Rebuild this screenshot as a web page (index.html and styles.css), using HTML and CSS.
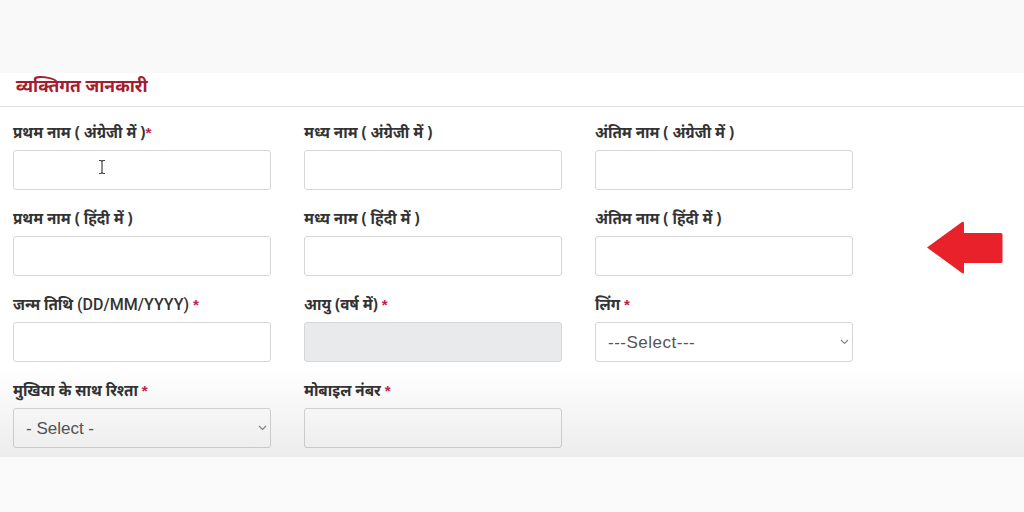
FILE: index.html
```html
<!DOCTYPE html>
<html lang="hi">
<head>
<meta charset="utf-8">
<title>व्यक्तिगत जानकारी</title>
<link rel="stylesheet" href="styles.css">
</head>
<body>
<div class="top"></div>
<section class="panel">
  <h2 class="panel-title">व्यक्तिगत जानकारी</h2>
  <div class="form">
    <div class="field">
      <label class="label">प्रथम नाम ( अंग्रेजी में )<span class="req">*</span></label>
      <div class="control">
        <input class="input" type="text">
        <svg class="ibeam" width="8" height="16" viewBox="0 0 8 16"><path d="M1 1.5h2l1 1 1-1h2M4 2.5v11M1 14.5h2l1-1 1 1h2" fill="none" stroke="#444" stroke-width="1.2"/></svg>
      </div>
    </div>
    <div class="field">
      <label class="label">मध्य नाम ( अंग्रेजी में )</label>
      <div class="control"><input class="input" type="text"></div>
    </div>
    <div class="field">
      <label class="label">अंतिम नाम ( अंग्रेजी में )</label>
      <div class="control"><input class="input" type="text"></div>
    </div>

    <div class="field">
      <label class="label">प्रथम नाम ( हिंदी में )</label>
      <div class="control"><input class="input" type="text"></div>
    </div>
    <div class="field">
      <label class="label">मध्य नाम ( हिंदी में )</label>
      <div class="control"><input class="input" type="text"></div>
    </div>
    <div class="field">
      <label class="label">अंतिम नाम ( हिंदी में )</label>
      <div class="control"><input class="input" type="text"></div>
    </div>

    <div class="field">
      <label class="label">जन्म तिथि <span class="latin">(DD/MM/YYYY)</span> <span class="req">*</span></label>
      <div class="control"><input class="input" type="text"></div>
    </div>
    <div class="field">
      <label class="label">आयु (वर्ष में) <span class="req">*</span></label>
      <div class="control"><input class="input input-disabled" type="text" disabled></div>
    </div>
    <div class="field">
      <label class="label">लिंग <span class="req">*</span></label>
      <div class="control">
        <select class="input select select-wide"><option>---Select---</option></select>
        <svg class="chev" width="9" height="6" viewBox="0 0 9 6"><path d="M1 1l3.5 3.5 3.5-3.5" fill="none" stroke="#888" stroke-width="1.2"/></svg>
      </div>
    </div>

    <div class="field">
      <label class="label">मुखिया के साथ रिश्ता <span class="req">*</span></label>
      <div class="control">
        <select class="input select"><option>- Select -</option></select>
        <svg class="chev" width="9" height="6" viewBox="0 0 9 6"><path d="M1 1l3.5 3.5 3.5-3.5" fill="none" stroke="#888" stroke-width="1.2"/></svg>
      </div>
    </div>
    <div class="field">
      <label class="label">मोबाइल नंबर <span class="req">*</span></label>
      <div class="control"><input class="input" type="text"></div>
    </div>
  </div>
  <svg class="arrow" width="80" height="56" viewBox="0 0 80 56"><path d="M2 27.5 L37 2 Q39 1 39 3.5 L39 13 L76 13 Q77.5 13 77.5 14.5 L77.5 41.5 Q77.5 43 76 43 L39 43 L39 52 Q39 54.5 37 53 Z" fill="#e8212a"/></svg>
  <div class="shade"></div>
</section>
<div class="bottom"></div>
</body>
</html>
```

FILE: styles.css
```css
html, body {
  margin: 0;
  padding: 0;
}
body {
  width: 1024px;
  height: 512px;
  overflow: hidden;
  background: #fafafa;
  font-family: "Noto Sans", "Noto Sans Devanagari", "Lohit Devanagari", "DejaVu Sans", sans-serif;
  color: #333;
}
.top {
  height: 73px;
  background: #f9f9f9;
}
.panel {
  position: relative;
  height: 384px;
  background: #fff;
}
.panel-title {
  margin: 0;
  height: 34px;
  box-sizing: border-box;
  padding: 0 0 10px 16px;
  display: flex;
  align-items: center;
  font-size: 17.5px;
  font-weight: 700;
  color: #a31c30;
  border-bottom: 1px solid #dedede;
}
.form {
  display: grid;
  grid-template-columns: repeat(3, 258px);
  column-gap: 33px;
  row-gap: 18px;
  padding: 15px 0 0 13px;
}
.field {
  display: flex;
  flex-direction: column;
  gap: 8px;
}
.label {
  height: 20px;
  line-height: 20px;
  font-size: 15.2px;
  font-weight: 700;
  color: #333;
  white-space: nowrap;
}
.latin {
  font-family: Roboto, "Liberation Sans", sans-serif;
  font-weight: 500;
  font-size: 16px;
}
.req {
  color: #c2214b;
  font-family: "Liberation Sans", sans-serif;
}
.control {
  position: relative;
  height: 40px;
}
.input {
  box-sizing: border-box;
  width: 258px;
  height: 40px;
  margin: 0;
  border: 1px solid #d6d6d6;
  border-radius: 3px;
  background: #fff;
  font-family: "Liberation Sans", Arial, sans-serif;
  font-size: 17px;
  color: #555;
  outline: none;
}
.input-disabled {
  background: #e8eaec;
}
.select {
  appearance: none;
  -webkit-appearance: none;
  padding: 0 0 0 12px;
}
.select-wide {
  letter-spacing: 0.5px;
}
.chev {
  position: absolute;
  right: 4px;
  top: 17px;
}
.ibeam {
  position: absolute;
  left: 85px;
  top: 9px;
}
.arrow {
  position: absolute;
  left: 925px;
  top: 147px;
}
.shade {
  position: absolute;
  left: 0;
  right: 0;
  bottom: 0;
  height: 90px;
  background: linear-gradient(to bottom, rgba(0,0,0,0) 0%, rgba(0,0,0,0.075) 100%);
  pointer-events: none;
}
.bottom {
  height: 55px;
  background: #fafafa;
}
```
